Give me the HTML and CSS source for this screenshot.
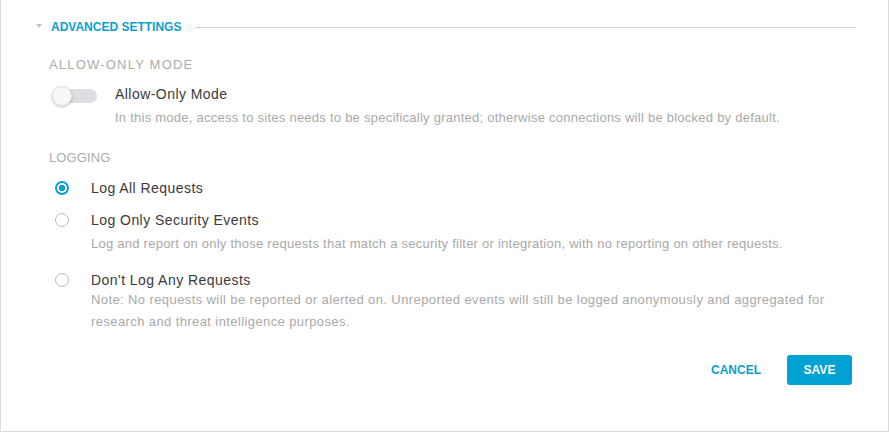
FILE: index.html
```html
<!DOCTYPE html>
<html>
<head>
<meta charset="utf-8">
<link rel="stylesheet" href="styles.css">
</head>
<body>
<div class="panel">
  <div class="section-head">
    <span class="caret"></span>
    <span class="section-title">ADVANCED SETTINGS</span>
    <span class="rule"></span>
  </div>

  <div class="group-label first wide">ALLOW-ONLY MODE</div>
  <div class="option toggle-option">
    <span class="toggle"><span class="knob"></span></span>
    <div class="option-text">
      <div class="option-title">Allow-Only Mode</div>
      <div class="option-desc">In this mode, access to sites needs to be specifically granted; otherwise connections will be blocked by default.</div>
    </div>
  </div>

  <div class="group-label">LOGGING</div>
  <div class="option radio-option">
    <span class="radio checked"></span>
    <div class="option-text">
      <div class="option-title">Log All Requests</div>
    </div>
  </div>
  <div class="option radio-option">
    <span class="radio"></span>
    <div class="option-text">
      <div class="option-title">Log Only Security Events</div>
      <div class="option-desc">Log and report on only those requests that match a security filter or integration, with no reporting on other requests.</div>
    </div>
  </div>
  <div class="option radio-option after-desc">
    <span class="radio"></span>
    <div class="option-text">
      <div class="option-title">Don't Log Any Requests</div>
      <div class="option-desc note">Note: No requests will be reported or alerted on. Unreported events will still be logged anonymously and aggregated for research and threat intelligence purposes.</div>
    </div>
  </div>

  <div class="actions">
    <button class="btn btn-link">CANCEL</button>
    <button class="btn btn-primary">SAVE</button>
  </div>
</div>
</body>
</html>
```

FILE: styles.css
```css
html, body {
  margin: 0;
  padding: 0;
  background: #fff;
}
body {
  font-family: "Liberation Sans", Arial, sans-serif;
  color: #333;
}
.panel {
  box-sizing: border-box;
  width: 889px;
  height: 432px;
  border: 1px solid #dcdcdc;
  border-top: none;
  padding: 18px 32px 0 34px;
}
.section-head {
  display: flex;
  align-items: center;
  height: 16px;
  margin-top: 1px;
}
.caret {
  width: 0;
  height: 0;
  border-left: 3px solid transparent;
  border-right: 3px solid transparent;
  border-top: 4px solid #c4c4c4;
  margin: 0 9px 2px 1px;
}
.section-title {
  font-size: 12px;
  font-weight: bold;
  color: #0a9fd1;
}
.rule {
  flex: 1;
  height: 1px;
  background: #cfcfcf;
  margin-left: 14px;
}
.group-label {
  font-size: 13px;
  color: #ababab;
  margin: 21px 0 0 14px;
  line-height: 16px;
  letter-spacing: 0.1px;
}
.group-label.first {
  margin-top: 22px;
}
.group-label.wide {
  letter-spacing: 1.2px;
}
.option {
  display: flex;
  align-items: flex-start;
}
.toggle-option {
  margin-top: 12px;
  padding-left: 18px;
}
.toggle {
  position: relative;
  width: 44px;
  height: 14px;
  border-radius: 7px;
  background: #dedee2;
  margin-top: 4px;
  flex: none;
}
.knob {
  position: absolute;
  left: -1px;
  top: -3px;
  width: 18px;
  height: 18px;
  border-radius: 50%;
  background: #f8f8f8;
  border: 1px solid #e2e2e2;
  box-shadow: 0 1px 3px rgba(0,0,0,0.25);
}
.toggle-option .option-text {
  margin-left: 18px;
}
.option-title {
  font-size: 14px;
  line-height: 18px;
  color: #3a3a3a;
  letter-spacing: 0.45px;
}
.option-desc {
  font-size: 13px;
  line-height: 22px;
  color: #a9a9a9;
  margin-top: 4px;
  letter-spacing: 0.25px;
}
.option-desc.note {
  margin-top: 0;
  letter-spacing: 0.4px;
}
.radio-option {
  padding-left: 20px;
  margin-top: 14px;
}
.radio-option.after-desc {
  margin-top: 16px;
}
.group-label + .radio-option {
  margin-top: 13px;
}
.radio {
  box-sizing: border-box;
  width: 14px;
  height: 14px;
  border-radius: 50%;
  border: 1.5px solid #b8b8b8;
  margin-top: 2px;
  flex: none;
  background: #fff;
}
.radio.checked {
  border: 2px solid #0a9fd1;
  background: radial-gradient(circle, #0a9fd1 0 3px, #fff 3.5px);
}
.radio-option .option-text {
  margin-left: 22px;
}
.actions {
  display: flex;
  justify-content: flex-end;
  align-items: center;
  margin-top: 22px;
  gap: 14px;
  padding-right: 4px;
}
.btn {
  font-family: "Liberation Sans", Arial, sans-serif;
  font-size: 12px;
  font-weight: bold;
  border: none;
  cursor: pointer;
  border-radius: 3px;
}
.btn-link {
  background: transparent;
  color: #0a9fd1;
  padding: 8px 12px;
}
.btn-primary {
  background: #00a1d3;
  color: #fff;
  width: 65px;
  height: 30px;
}
```
